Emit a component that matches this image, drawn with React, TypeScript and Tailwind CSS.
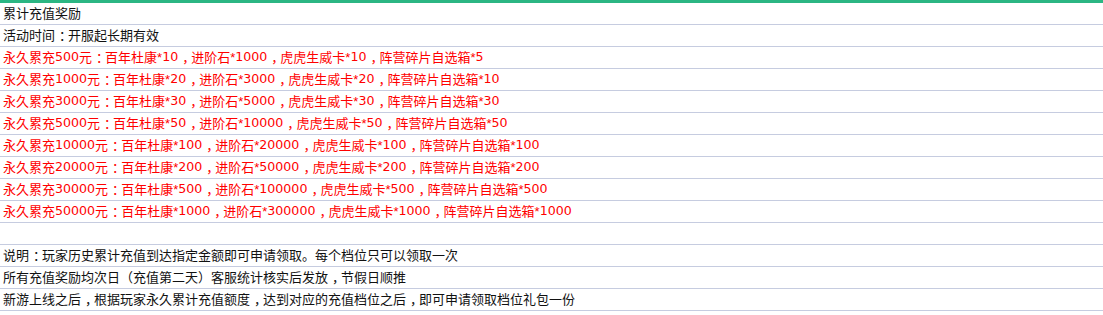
const rows: { text: string; red?: boolean }[] = [
  { text: "累计充值奖励" },
  { text: "活动时间：开服起长期有效" },
  { text: "永久累充500元：百年杜康*10，进阶石*1000，虎虎生威卡*10，阵营碎片自选箱*5", red: true },
  { text: "永久累充1000元：百年杜康*20，进阶石*3000，虎虎生威卡*20，阵营碎片自选箱*10", red: true },
  { text: "永久累充3000元：百年杜康*30，进阶石*5000，虎虎生威卡*30，阵营碎片自选箱*30", red: true },
  { text: "永久累充5000元：百年杜康*50，进阶石*10000，虎虎生威卡*50，阵营碎片自选箱*50", red: true },
  { text: "永久累充10000元：百年杜康*100，进阶石*20000，虎虎生威卡*100，阵营碎片自选箱*100", red: true },
  { text: "永久累充20000元：百年杜康*200，进阶石*50000，虎虎生威卡*200，阵营碎片自选箱*200", red: true },
  { text: "永久累充30000元：百年杜康*500，进阶石*100000，虎虎生威卡*500，阵营碎片自选箱*500", red: true },
  { text: "永久累充50000元：百年杜康*1000，进阶石*300000，虎虎生威卡*1000，阵营碎片自选箱*1000", red: true },
  { text: "" },
  { text: "说明：玩家历史累计充值到达指定金额即可申请领取。每个档位只可以领取一次" },
  { text: "所有充值奖励均次日（充值第二天）客服统计核实后发放，节假日顺推" },
  { text: "新游上线之后，根据玩家永久累计充值额度，达到对应的充值档位之后，即可申请领取档位礼包一份" },
];

// digits are wider and the full-width colon/comma sit centred in the original font
function Line({ text }: { text: string }) {
  return (
    <>
      {text.split(/(\d+|[：，])/).map((part, i) => {
        if (/^\d+$/.test(part))
          return (
            <span key={i} className="font-['DejaVu_Sans',sans-serif] text-[12.6px]">
              {part}
            </span>
          );
        if (part === "：" || part === "，")
          return (
            <span key={i} className="pl-[4px] tracking-[-4px]">
              {part}
            </span>
          );
        return <span key={i}>{part}</span>;
      })}
    </>
  );
}

export default function App() {
  return (
    <div className="w-[1103px] h-[315px] bg-white border-t-[3px] border-[#2bb683] font-['Liberation_Sans','Noto_Sans_CJK_SC',sans-serif] text-[13px]">
      {rows.map((r, i) => (
        <div
          key={i}
          className={`h-[22px] flex items-center pl-[3px] border-b border-[#c6cce0] whitespace-nowrap ${r.red ? "text-[#ff0000]" : "text-[#111]"}`}
        >
          <Line text={r.text} />
        </div>
      ))}
    </div>
  );
}
